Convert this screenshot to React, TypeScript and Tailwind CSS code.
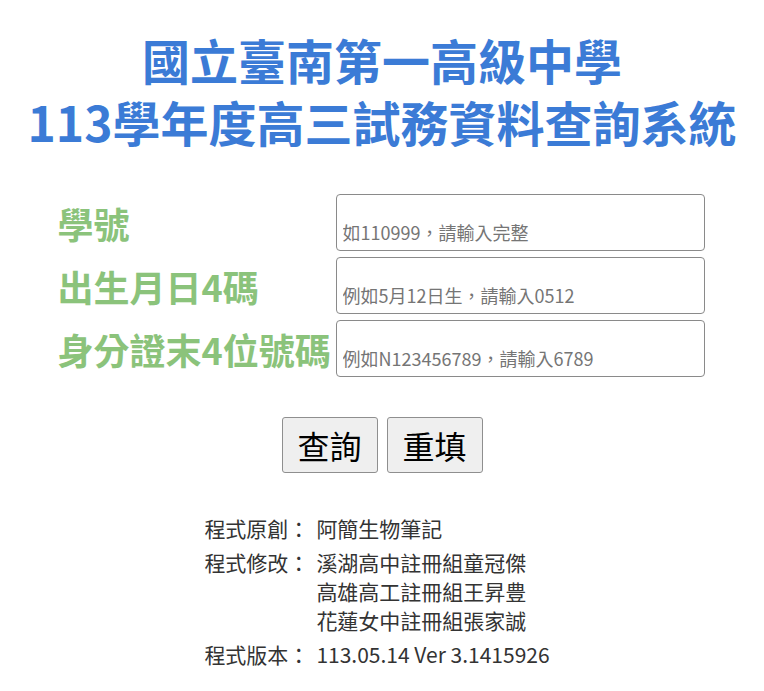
import React from 'react';

const cjk = "font-['Noto_Sans_CJK_TC','Noto_Sans',sans-serif]";

const fields = [
  { label: '學號', placeholder: '如110999，請輸入完整' },
  { label: '出生月日4碼', placeholder: '例如5月12日生，請輸入0512' },
  { label: '身分證末4位號碼', placeholder: '例如N123456789，請輸入6789' },
];

export default function App() {
  return (
    <div className={`min-h-[691px] bg-white ${cjk}`}>
      {/* 標題 */}
      <h1 className="pt-[28px] text-center text-[48px] font-bold leading-[62px] text-[#3b7bd6]">
        <span className="block">國立臺南第一高級中學</span>
        <span className="block">113學年度高三試務資料查詢系統</span>
      </h1>

      {/* 表單 */}
      <form className="mt-[42px] flex flex-col items-center gap-[6px]" onSubmit={(e) => e.preventDefault()}>
        {fields.map((f) => (
          <div key={f.label} className="flex items-center pr-[2px]">
            <label className="w-[278px] text-[36px] font-bold leading-none text-[#8bc37b]">{f.label}</label>
            <input
              type="text"
              placeholder={f.placeholder}
              className="h-[57px] w-[369px] rounded-[4px] border border-[#8a8a8a] px-[6px] pt-[18px] text-[18px] text-[#333] placeholder:text-[#757575] outline-none"
            />
          </div>
        ))}

        <div className="mt-[34px] flex gap-[9px]">
          <button
            type="submit"
            className="h-[56px] w-[96px] rounded-[3px] border border-[#8f8f8f] bg-[#efefef] text-[32px] leading-none text-black"
          >
            查詢
          </button>
          <button
            type="reset"
            className="h-[56px] w-[96px] rounded-[3px] border border-[#8f8f8f] bg-[#efefef] text-[32px] leading-none text-black"
          >
            重填
          </button>
        </div>
      </form>

      {/* 版權資訊 */}
      <div className="mt-[41px] flex justify-center pr-[10px]">
        <div className="grid grid-cols-[112px_auto] gap-y-[5px] text-[21px] leading-[29px] text-[#333]">
          <span>程式原創：</span>
          <span>阿簡生物筆記</span>
          <span>程式修改：</span>
          <span>
            溪湖高中註冊組童冠傑
            <br />
            高雄高工註冊組王昇豊
            <br />
            花蓮女中註冊組張家誠
          </span>
          <span>程式版本：</span>
          <span>113.05.14 Ver 3.1415926</span>
        </div>
      </div>
    </div>
  );
}
